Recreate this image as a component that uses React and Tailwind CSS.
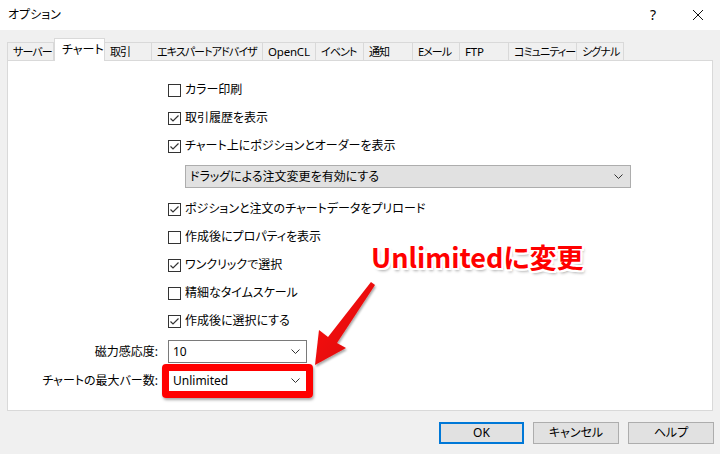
import React from 'react';

const tabs = [
  { label: 'サーバー', w: 47 },
  { label: 'チャート', w: 51, active: true },
  { label: '取引', w: 47 },
  { label: 'エキスパートアドバイザ', w: 111 },
  { label: 'OpenCL', w: 53, latin: true },
  { label: 'イベント', w: 48 },
  { label: '通知', w: 49 },
  { label: 'Eメール', w: 47 },
  { label: 'FTP', w: 49, latin: true },
  { label: 'コミュニティー', w: 68 },
  { label: 'シグナル', w: 47 },
];

const options = [
  { label: 'カラー印刷', checked: false },
  { label: '取引履歴を表示', checked: true },
  { label: 'チャート上にポジションとオーダーを表示', checked: true },
];

const options2 = [
  { label: 'ポジションと注文のチャートデータをプリロード', checked: true },
  { label: '作成後にプロパティを表示', checked: false },
  { label: 'ワンクリックで選択', checked: true },
  { label: '精細なタイムスケール', checked: false },
  { label: '作成後に選択にする', checked: true },
];

const Chevron = () => (
  <svg width="9" height="5" viewBox="0 0 9 5" className="shrink-0">
    <path d="M0.5 0.5 L4.5 4.5 L8.5 0.5" fill="none" stroke="#333" strokeWidth="1" />
  </svg>
);

const Checkbox = ({ label, checked }) => (
  <div className="flex items-center h-[28px] pl-[160px]">
    <div className="w-[13px] h-[13px] border border-[#333] bg-white flex items-center justify-center shrink-0">
      {checked && (
        <svg width="11" height="11" viewBox="0 0 11 11">
          <path d="M1.5 5.5 L4 8 L9.5 2.5" fill="none" stroke="#333" strokeWidth="1.2" />
        </svg>
      )}
    </div>
    <span className="ml-[4px] whitespace-nowrap">{label}</span>
  </div>
);

const Combo = ({ value }) => (
  <div className="ml-[10px] w-[139px] h-[23px] border border-[#7a7a7a] bg-white flex items-center justify-between pl-[4px] pr-[6px]">
    <span>{value}</span>
    <Chevron />
  </div>
);

const Button = ({ children, primary }) => (
  <div
    className={
      primary
        ? 'w-[85px] h-[22px] border-2 border-[#0078d7] bg-[#e1e1e1] flex items-center justify-center'
        : 'w-[86px] h-[22px] border border-[#adadad] bg-[#e1e1e1] flex items-center justify-center'
    }
  >
    {children}
  </div>
);

export default function App() {
  return (
    <div className="relative w-[720px] h-[454px] overflow-hidden bg-[#f0f0f0] text-[12px] leading-none text-black font-['Noto_Sans','Noto_Sans_CJK_JP',sans-serif] [font-feature-settings:'palt']">
      {/* title bar */}
      <div className="h-[30px] bg-white flex items-center pl-[8px]">
        <span className="flex-1">オプション</span>
        <span className="text-[14px] mr-[36px]">?</span>
        <svg width="12" height="12" viewBox="0 0 12 12" className="mr-[16px]">
          <path d="M1 1 L11 11 M11 1 L1 11" stroke="#111" strokeWidth="1" />
        </svg>
      </div>

      {/* tabs */}
      <div className="h-[30px] flex items-end pl-[7px]">
        {tabs.map((t) =>
          t.active ? (
            <div
              key={t.label}
              style={{ width: t.w }}
              className="relative z-10 h-[23px] -mb-px bg-white border border-b-0 border-[#d9d9d9] pl-[7px] pt-[5px] whitespace-nowrap"
            >
              {t.label}
            </div>
          ) : (
            <div
              key={t.label}
              style={{ width: t.w }}
              className={
                t.latin
                  ? 'h-[18px] bg-[#f0f0f0] border border-b-0 border-l-0 border-[#d9d9d9] pl-[5px] pt-[3px] whitespace-nowrap text-[11.5px] tracking-[-0.2px]'
                  : 'h-[18px] bg-[#f0f0f0] border border-b-0 border-l-0 first:border-l border-[#d9d9d9] pl-[5px] pt-[3px] whitespace-nowrap text-[11px] tracking-[-0.9px]'
              }
            >
              {t.label}
            </div>
          )
        )}
      </div>

      {/* panel */}
      <div className="mx-[7px] h-[351px] border border-[#d9d9d9] bg-white pt-[15px]">
        {options.map((o) => (
          <Checkbox key={o.label} {...o} />
        ))}
        <div className="ml-[177px] mt-[5px] w-[446px] h-[23px] bg-[#e1e1e1] border border-[#adadad] flex items-center justify-between pl-[4px] pr-[7px]">
          <span>ドラッグによる注文変更を有効にする</span>
          <Chevron />
        </div>
        <div className="mt-[7px]">
          {options2.map((o) => (
            <Checkbox key={o.label} {...o} />
          ))}
        </div>
        <div className="mt-[5px] flex items-center">
          <span className="w-[150px] text-right whitespace-nowrap">磁力感応度:</span>
          <Combo value="10" />
        </div>
        <div className="mt-[6px] flex items-center">
          <span className="w-[150px] text-right whitespace-nowrap">チャートの最大バー数:</span>
          <Combo value="Unlimited" />
        </div>
      </div>

      {/* buttons */}
      <div className="mt-[11px] flex justify-end gap-[9px] pr-[6px]">
        <Button primary>OK</Button>
        <Button>キャンセル</Button>
        <Button>ヘルプ</Button>
      </div>

      {/* annotation overlay */}
      <div className="absolute left-[162px] top-[364px] w-[151px] h-[34px] border-[7px] border-[#ff0000] rounded-[4px] shadow-[1px_2px_3px_rgba(0,0,0,0.35)]" />
      <div className="absolute left-[371px] top-[243px] whitespace-nowrap text-[27px] leading-none font-bold text-[#ff0000] font-['Noto_Sans_CJK_JP',sans-serif] [text-shadow:2px_0_0_#fff,-2px_0_0_#fff,0_2px_0_#fff,0_-2px_0_#fff,2px_2px_0_#fff,-2px_-2px_0_#fff,2px_-2px_0_#fff,-2px_2px_0_#fff,2px_3px_3px_rgba(0,0,0,0.35)]">
        Unlimitedに変更
      </div>
      <svg className="absolute left-[300px] top-[275px]" width="90" height="100" viewBox="300 275 90 100">
        <defs>
          <linearGradient id="arr" x1="0" y1="0" x2="1" y2="1">
            <stop offset="0" stopColor="#ff1a1a" />
            <stop offset="1" stopColor="#d80000" />
          </linearGradient>
          <filter id="sh" x="-20%" y="-20%" width="140%" height="140%">
            <feDropShadow dx="1" dy="2" stdDeviation="1.2" floodColor="#000" floodOpacity="0.35" />
          </filter>
        </defs>
        <polygon
          points="371,282 375,285 337,343 346,348 315,365 319,330 328,337"
          fill="url(#arr)"
          filter="url(#sh)"
        />
      </svg>
    </div>
  );
}
